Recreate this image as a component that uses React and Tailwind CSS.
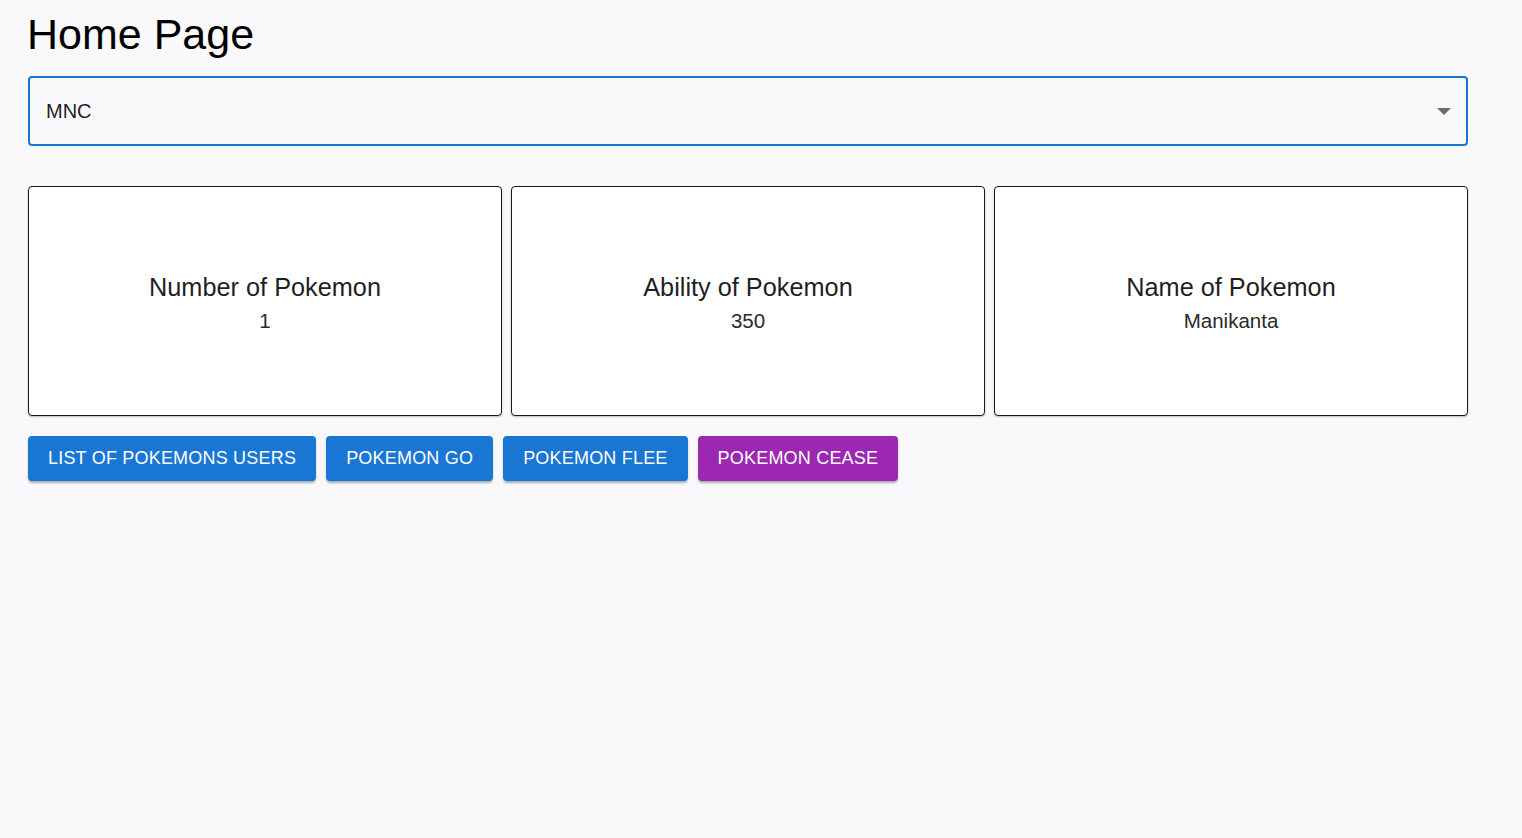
import { useState } from "react";

const stats = [
  { title: "Number of Pokemon", value: "1" },
  { title: "Ability of Pokemon", value: "350" },
  { title: "Name of Pokemon", value: "Manikanta" },
];

const actions = [
  { label: "List of Pokemons Users", color: "bg-[#1976d2]" },
  { label: "Pokemon Go", color: "bg-[#1976d2]" },
  { label: "Pokemon Flee", color: "bg-[#1976d2]" },
  { label: "Pokemon Cease", color: "bg-[#9c27b0]" },
];

const App = () => {
  const [company] = useState("MNC");

  return (
    <div className="min-h-[838px] bg-[#f9f9fb] font-['Liberation_Sans',Arial,sans-serif] text-black">
      <div className="w-[1440px] ml-[28px] pt-[8px]">
        <h1 className="text-[43px] leading-[52px] -ml-[1px]">
          Home Page
        </h1>

        <div className="mt-[16px] flex h-[70px] items-center justify-between rounded-[4px] border-2 border-[#1976d2] pl-[16px] pr-[16px]">
          <span className="text-[20px] text-[#1f1f1f]">
            {company}
          </span>
          <svg width="14" height="7" viewBox="0 0 10 5" className="-mr-[1px]">
            <path d="M0 0 L5 5 L10 0 Z" fill="#6b6b6b" />
          </svg>
        </div>

        <div className="mt-[40px] grid grid-cols-3 gap-[9px]">
          {stats.map((stat) => (
            <div
              key={stat.title}
              className="flex h-[230px] flex-col items-center justify-center rounded-[4px] border border-[#1a1a1a] bg-white pt-[3px] shadow-[0_1px_2px_rgba(0,0,0,0.25)]"
            >
              <div className="text-[25.3px] leading-[32px] text-[#1f1f1f]">
                {stat.title}
              </div>
              <div className="mt-[5px] text-[20.5px] leading-[26px] text-[#2a2a2a]">
                {stat.value}
              </div>
            </div>
          ))}
        </div>

        <div className="mt-[20px] flex gap-[10px]">
          {actions.map((action) => (
            <button
              key={action.label}
              type="button"
              className={`${action.color} h-[45px] rounded-[4px] px-[20px] text-[18px] tracking-[0.2px] uppercase text-white shadow-[0_3px_2px_-1px_rgba(0,0,0,0.2),0_2px_3px_0_rgba(0,0,0,0.14)]`}
            >
              {action.label}
            </button>
          ))}
        </div>
      </div>
    </div>
  );
};

export default App;
